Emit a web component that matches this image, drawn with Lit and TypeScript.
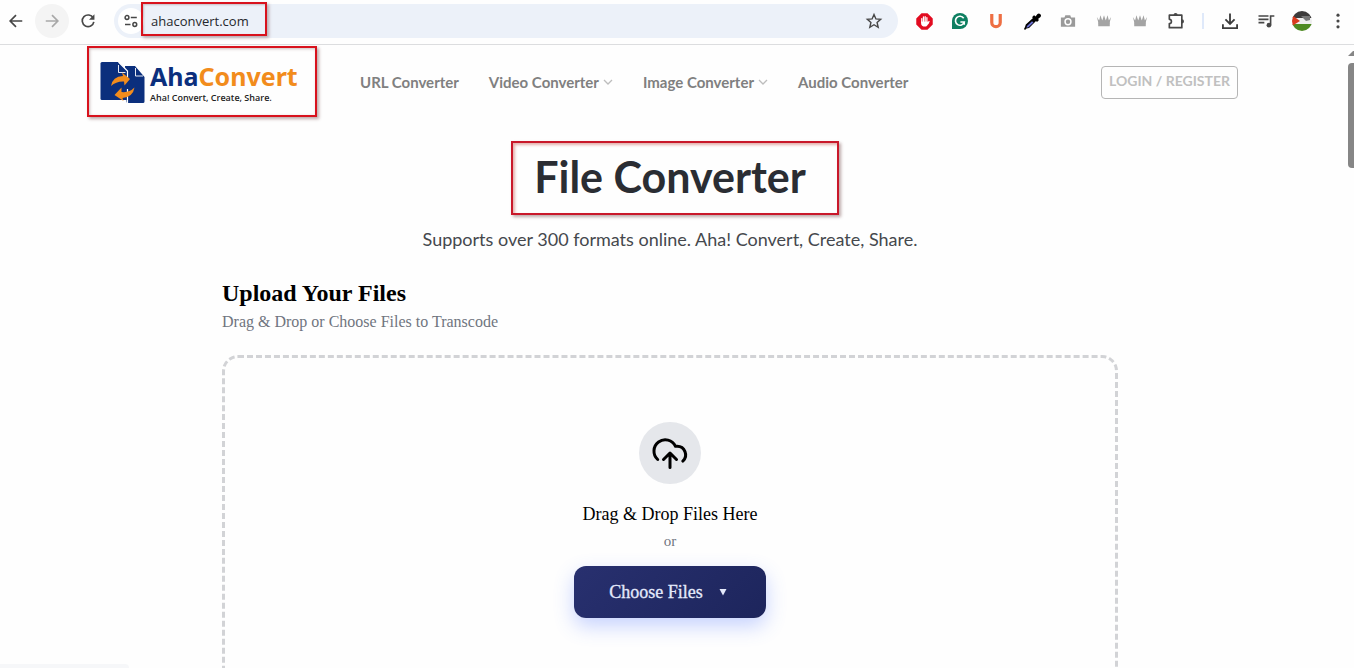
import { LitElement, html, css, svg } from "lit";
import { customElement } from "lit/decorators.js";

const icon = (size: number, body: unknown, box = "0 0 24 24") =>
  html`<svg width=${size} height=${size} viewBox=${box} aria-hidden="true">${body}</svg>`;

const crown = svg`<path fill="#a4a4a4" d="M1 4l2.500 4L5 2l2 6L9 2l2 6L13 2l1.500 6L17 4l-1.500 6v4.500h-13V10z"/><path fill="#a4a4a4" d="M3 8h12v4H3z"/>`;

@customElement("browser-bar")
export class BrowserBar extends LitElement {
  static styles = css`
    :host { display: block; font-family: "Open Sans", "Noto Sans", sans-serif; }
    .bar {
      display: flex; align-items: center; gap: 4px; height: 45px; padding-bottom: 2px;
      box-sizing: border-box; border-bottom: 1px solid #dcdddf; background: #fefefe;
    }
    .btn {
      flex: none; width: 32px; height: 32px; padding: 0; border: 0; border-radius: 50%; background: none;
      display: flex; align-items: center; justify-content: center; color: #474747;
    }
    .dim { background: #f4f4f4; box-shadow: 0 0 0 1px #f4f4f4; color: #a8a8a8; }
    .pill {
      flex: 1; min-width: 0; display: flex; align-items: center; height: 34px; margin: 0 6px;
      border-radius: 17px; background: #ecf1f9; padding: 0 8px 0 4px; box-sizing: border-box;
    }
    .site { width: 26px; height: 26px; background: #fff; }
    .mark { position: relative; flex: 1; min-width: 0; padding-left: 7px; }
    .mark::after {
      content: ""; position: absolute; left: -3px; top: -9px; width: 122px; bottom: -5px;
      border: 2px solid #d8121d; pointer-events: none;
      box-shadow: 2px 2px 3px rgba(90, 40, 40, .35), inset 1px 1px 2px rgba(90, 40, 40, .25);
    }
    .url {
      display: block; width: 100%; height: 20px; padding: 0; border: 0; background: none; outline: 0;
      font: 13px/20px "Open Sans", "Noto Sans", sans-serif; color: #26282c;
    }
    .rule { flex: none; width: 2px; height: 16px; margin: 0 6px; background: #dfe9fa; }
    svg { display: block; }
  `;

  render() {
    return html`<div class="bar">
      <button class="btn" aria-label="Back">${icon(20, svg`<path fill="none" stroke="currentColor" stroke-width="2" d="M19.500 12H5.500M12 5l-7 7 7 7"/>`)}</button>
      <button class="btn dim" aria-label="Forward">${icon(20, svg`<path fill="none" stroke="currentColor" stroke-width="2" d="M4.500 12h14M12 5l7 7-7 7"/>`)}</button>
      <button class="btn" aria-label="Reload">${icon(20, svg`<path fill="none" stroke="currentColor" stroke-width="2" d="M18.300 8.500A7 7 0 1 0 19 13"/><path fill="currentColor" d="M19.700 4v6.500h-6.500z"/>`)}</button>
      <div class="pill">
        <button class="btn site" aria-label="Site information">${icon(16, svg`<g fill="none" stroke="#474747" stroke-width="1.500"><circle cx="4" cy="4.500" r="1.900"/><path d="M7.800 4.500h6M2 11.500h5.500"/><circle cx="11.800" cy="11.500" r="1.900"/></g>`, "0 0 16 16")}</button>
        <div class="mark"><input class="url" aria-label="Address" value="ahaconvert.com"></div>
        <button class="btn" aria-label="Bookmark">${icon(20, svg`<path fill="none" stroke="#474747" stroke-width="1.700" d="M12 4.200l2.300 5.300 5.700.500-4.300 3.800 1.300 5.700-5-3-5 3 1.300-5.700L4 10l5.700-.500z"/>`)}</button>
      </div>
      <button class="btn" aria-label="Ad blocker">${icon(17, svg`<path fill="#e20b20" d="M6.500 .3h7L19.700 6.500v7L13.500 19.700h-7L.3 13.500v-7z"/><g stroke="#fff" stroke-width="1.500" stroke-linecap="round"><path d="M6.800 11V6.500M8.800 10V4.600M10.800 10V4.300M12.800 11V5.500M14 12.500l1.300-2.500"/></g><path fill="#fff" d="M6 10h7.600l1 2q-1.300 4-4 4-4.600 0-4.600-4z"/>`, "0 0 20 20")}</button>
      <button class="btn" aria-label="Writing assistant">${icon(16, svg`<path fill="#0e7f61" d="M10 0a10 10 0 1 1 0 20H0V10A10 10 0 0 1 10 0z"/><path fill="none" stroke="#fff" stroke-width="2" d="M14.600 6.500A5.600 5.600 0 1 0 15.300 11.300H10.500M15.300 10.300v4.500"/>`, "0 0 20 20")}</button>
      <button class="btn" aria-label="U extension">${icon(16, svg`<path fill="none" stroke="#ee6f43" stroke-width="3.400" d="M4 1v9a4.500 4.500 0 0 0 9 0V1"/>`, "0 0 17 17")}</button>
      <button class="btn" aria-label="Colour picker">${icon(17, svg`<path fill="#000" d="M10.500 2.500l1 1L13.500 1q1.500-1 2.800.2t.2 2.800L14 6l1 1-2 2-1-1-7 7-2.500.5L1 17l-1-1 1-2 .8-2.500L9 5l-1-.8 2-2z"/><path fill="#6a6fd0" d="M8 8.200L9.500 9.500l-5 4.700-2 .5.500-1.800z"/>`, "0 0 17 17")}</button>
      <button class="btn" aria-label="Screenshot">${icon(16, svg`<path fill="#9a9a9a" d="M1 4.500h4L6 2h5.500l1 2.500H17V15H1z"/><circle cx="9" cy="9.300" r="3.300" fill="#9a9a9a" stroke="#fff" stroke-width="1.700"/>`, "0 0 18 17")}</button>
      <button class="btn" aria-label="Crown extension">${icon(16, crown, "0 0 18 17")}</button>
      <button class="btn" aria-label="Second crown extension">${icon(16, crown, "0 0 18 17")}</button>
      <button class="btn" aria-label="Extensions">${icon(20, svg`<path fill="none" stroke="#474747" stroke-width="2" stroke-linejoin="round" d="M4 5h15v15H4v-5a2.500 2.500 0 0 0 0-5z"/><path fill="#474747" d="M9 5a2.500 2.500 0 0 1 5 0zM19 9.800a2.600 2.600 0 0 1 0 5.200z"/>`)}</button>
      <span class="rule"></span>
      <button class="btn" aria-label="Downloads">${icon(20, svg`<path fill="none" stroke="#3c3c3c" stroke-width="2.200" d="M12 3v12M6.500 10l5.500 5.500 5.500-5.500M3.500 16v4.500h17V16"/>`)}</button>
      <button class="btn" aria-label="Media controls">${icon(20, svg`<path fill="none" stroke="#474747" stroke-width="2" d="M3 6h12M3 10h12M3 14h7"/><path fill="none" stroke="#474747" stroke-width="2" d="M17.500 17V6H22"/><circle cx="15.500" cy="17" r="2.800" fill="#474747"/>`)}</button>
      <button class="btn" aria-label="Profile">${icon(20, svg`<clipPath id="disc"><circle cx="10" cy="10" r="10"/></clipPath><g clip-path="url(#disc)"><path fill="#3d3b3b" d="M0 0h20v7H0z"/><path fill="#eee" d="M0 7h20v7H0z"/><path fill="#4e8a22" d="M0 13h20v7H0z"/><path fill="#777" d="M9 5h9v4l-4 1z"/><path fill="#d93a1e" d="M0 4l8 6-8 5z"/></g>`, "0 0 20 20")}</button>
      <button class="btn" aria-label="Menu">${icon(20, svg`<g fill="#474747"><circle cx="12" cy="5" r="1.900"/><circle cx="12" cy="12" r="1.900"/><circle cx="12" cy="19" r="1.900"/></g>`)}</button>
    </div>`;
  }
}

@customElement("site-header")
export class SiteHeader extends LitElement {
  static styles = css`
    :host { display: block; font-family: Lato, sans-serif; }
    .row {
      display: flex; align-items: center; max-width: 1140px; margin: 0 auto; padding: 16px 2px 17px 0;
      box-sizing: border-box;
    }
    .logo {
      position: relative; display: flex; align-items: center; gap: 5px; width: 200px; flex: none;
      text-decoration: none; font-family: "Noto Sans", "Open Sans", sans-serif;
    }
    .logo::after {
      content: ""; position: absolute; inset: -15px -17px -13px -13px; border: 2px solid #d8121d;
      box-shadow: 2px 2px 3px rgba(90, 40, 40, .4), inset 1px 1px 3px rgba(90, 40, 40, .3);
      pointer-events: none;
    }
    .words { display: grid; gap: 2px; }
    .name { font-size: 25px; font-weight: 700; line-height: 28px; color: #0b2f7d; white-space: nowrap; }
    .accent { color: #f28c1c; }
    .tag { font: 600 9px/12px "Open Sans", "Noto Sans", sans-serif; color: #222; white-space: nowrap; }
    .nav { display: flex; gap: 30px; margin-left: 60px; padding-bottom: 2px; }
    .link {
      display: flex; align-items: center; gap: 4px; font-size: 15px; font-weight: 700; line-height: 20px;
      color: #808080; text-decoration: none; white-space: nowrap;
    }
    .login {
      margin-left: auto; height: 33px; padding: 0 7px 3px; border: 1px solid #b5b5b5; border-radius: 4px;
      background: none; font: 700 14px/20px Lato, sans-serif; color: #c0c0c0; white-space: nowrap;
    }
    svg { display: block; flex: none; }
  `;

  private chevron = html`<svg width="10" height="6" viewBox="0 0 10 6" aria-hidden="true"><path d="M1 1l4 4 4-4" fill="none" stroke="#bdbdbd" stroke-width="1.300"/></svg>`;

  render() {
    return html`<div class="row">
      <a class="logo" href="#">
        <svg width="45" height="43" viewBox="0 0 45 43" aria-hidden="true">
          <path fill="#0b2f7d" d="M2 1h16.500l9 9v29H2q-1.500 0-1.500-1.500v-35Q.5 1 2 1z"/>
          <path fill="#0b2f7d" d="M25 5h10l9.500 11v24.500q0 1.500-1.500 1.500H28q-1.500 0-1.500-1.500z"/>
          <path fill="none" stroke="#fff" stroke-width="1.200" d="M18.500 1l9 9V17M27.500 28v14"/>
          <path fill="none" stroke="#fff" stroke-width=".9" d="M18.500 4v7.500h7M35.500 7v8h7.500"/>
          <path fill="#f28c1c" d="M11 25q1.500-9.500 12-10l-1-3.500 8 6.500-5.500 6.500-.5-4q-7.500-.5-13 4.500z"/>
          <path fill="#f28c1c" d="M34.500 26.500q-1.500 9.500-12 10.500l1 3-9-6 7-7.500v4.500q7.500 1 13-4.500z"/>
        </svg>
        <span class="words">
          <span class="name">Aha<span class="accent">Convert</span></span>
          <span class="tag">Aha! Convert, Create, Share.</span>
        </span>
      </a>
      <nav class="nav">
        <a class="link" href="#">URL Converter</a>
        <a class="link" href="#">Video Converter${this.chevron}</a>
        <a class="link" href="#">Image Converter${this.chevron}</a>
        <a class="link" href="#">Audio Converter</a>
      </nav>
      <button class="login">LOGIN / REGISTER</button>
    </div>`;
  }
}

@customElement("upload-panel")
export class UploadPanel extends LitElement {
  static styles = css`
    :host { display: block; font-family: "Liberation Serif", serif; }
    .panel { max-width: 896px; margin: 0 auto; }
    .head { margin: 0; font-size: 24px; line-height: 28px; font-weight: 700; color: #000; }
    .sub { margin: 5px 0 23px; font-size: 16px; line-height: 20px; color: #70757f; }
    .zone {
      display: flex; flex-direction: column; align-items: center; padding: 64px 24px;
      border: 3px dashed #d2d3d6; border-radius: 16px;
    }
    .disc {
      display: flex; align-items: center; justify-content: center; width: 62px; height: 62px;
      border-radius: 50%; background: #e5e7eb;
    }
    .lead { margin: 18px 0 5px; font-size: 18px; line-height: 24px; color: #000; }
    .or { margin: 0 0 15px; font-size: 15px; line-height: 20px; color: #70757f; }
    .choose {
      display: flex; align-items: center; justify-content: center; gap: 16px; width: 192px; height: 52px;
      padding: 0 4px 0 0; border: 0; border-radius: 12px; color: #e4e9fb; font: 18px/24px "Liberation Serif", serif;
      -webkit-text-stroke: .3px #e4e9fb;
      background: linear-gradient(135deg, #28306f, #1d255c);
      box-shadow: 0 8px 20px rgba(70, 110, 255, .3);
    }
  `;

  render() {
    return html`<section class="panel">
      <h2 class="head">Upload Your Files</h2>
      <p class="sub">Drag &amp; Drop or Choose Files to Transcode</p>
      <div class="zone">
        <span class="disc">
          <svg width="40" height="40" viewBox="0 0 40 40" fill="none" stroke="#000" stroke-width="3" stroke-linecap="round" stroke-linejoin="round" aria-hidden="true">
            <path d="M7.700 26.500A11.300 11.300 0 1 1 25.500 13.300h1.300a8.500 8.500 0 0 1 6 14.800"/>
            <path d="M20 34.500V21M13.500 26.500L20 20l6.500 6.500"/>
          </svg>
        </span>
        <p class="lead">Drag &amp; Drop Files Here</p>
        <p class="or">or</p>
        <button class="choose">Choose Files
          <svg width="8" height="7" viewBox="0 0 8 7" aria-hidden="true"><path fill="#e4e9fb" d="M.5 0h7L4 6.500z"/></svg>
        </button>
      </div>
    </section>`;
  }
}

@customElement("app-root")
export class AppRoot extends LitElement {
  static styles = css`
    :host { display: flex; flex-direction: column; position: relative; height: 100vh; overflow: hidden; background: #fefefe; }
    .view { flex: 1; min-height: 0; display: flex; overflow: hidden; }
    .page { flex: 1; min-width: 0; font-family: Lato, sans-serif; }
    .hero { padding: 30px 0 28px; text-align: center; }
    .title {
      position: relative; display: table; margin: 0 auto; font-size: 43px; line-height: 52px;
      font-weight: 700; color: #2a2d33;
    }
    .title::after {
      content: ""; position: absolute; inset: -10px -33px -12px -23px; border: 2px solid #c9182a;
      box-shadow: 2px 2px 3px rgba(90, 40, 40, .4), inset 2px 2px 3px rgba(190, 60, 50, .4);
      pointer-events: none;
    }
    .lede { margin: 24px 0 0; font-size: 18px; line-height: 24px; color: #45484d; }
    .scroll { flex: none; width: 14px; display: flex; flex-direction: column; align-items: flex-end; overflow: hidden; }
    .up { display: block; margin: 6px 0 7px; }
    .thumb { width: 6px; height: 105px; border-radius: 4px 0 0 4px; background: #868686; }
    .status { position: absolute; left: 0; bottom: 0; width: 129px; height: 4px; border-radius: 0 4px 0 0; background: #f6f7f9; }
  `;

  render() {
    return html`
      <browser-bar></browser-bar>
      <div class="view">
        <main class="page">
          <site-header></site-header>
          <div class="hero">
            <h1 class="title">File Converter</h1>
            <p class="lede">Supports over 300 formats online. Aha! Convert, Create, Share.</p>
          </div>
          <upload-panel></upload-panel>
        </main>
        <div class="scroll">
          <svg class="up" width="6" height="5" viewBox="0 0 6 5" aria-hidden="true"><path fill="#868686" d="M0 5l5-5h1v5z"/></svg>
          <div class="thumb"></div>
        </div>
      </div>
      <div class="status"></div>
    `;
  }
}
